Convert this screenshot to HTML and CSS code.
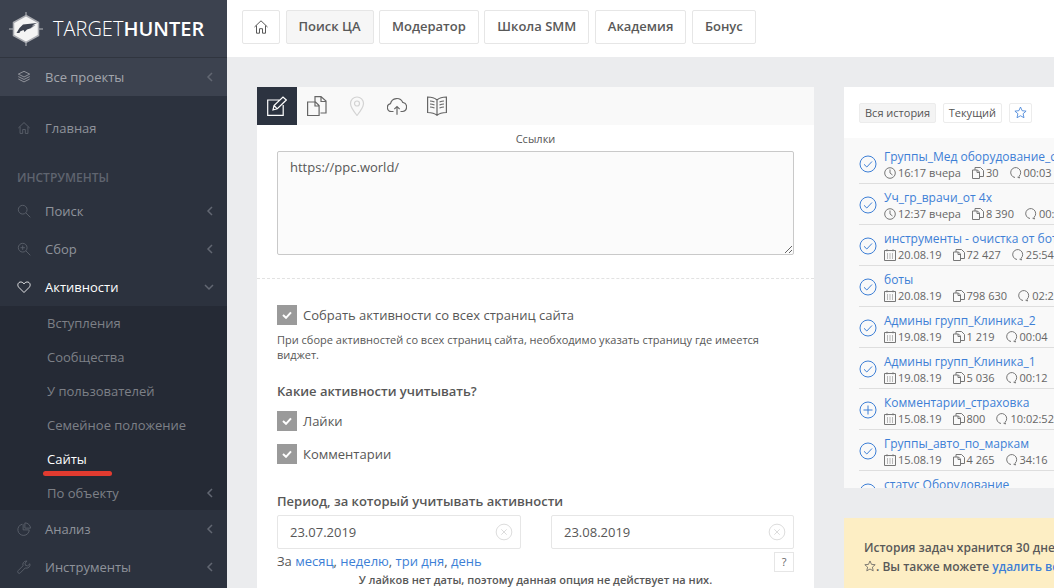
FILE: index.html
```html
<!DOCTYPE html>
<html lang="en">

<head>
  <meta charset="UTF-8">
  <title>TargetHunter</title>
  <link rel="stylesheet" href="styles.css">
</head>

<body>
  <svg class="sprite" width="0" height="0">
    <symbol id="i-layers" viewBox="0 0 16 16"><path d="M8 1.500l6.500 3.200L8 8 1.500 4.700zM1.500 7.500L8 10.800l6.500-3.300M1.500 10.300L8 13.600l6.500-3.300"/></symbol>
    <symbol id="i-home" viewBox="0 0 16 16"><path d="M1.500 8L8 1.800 14.500 8M3.500 6.500v7.700h3v-4.500h3v4.500h3V6.500"/></symbol>
    <symbol id="i-search" viewBox="0 0 16 16"><circle cx="6.500" cy="6.500" r="5"/><path d="M10.200 10.200l5 5"/></symbol>
    <symbol id="i-zoom" viewBox="0 0 16 16"><circle cx="6.500" cy="6.500" r="5"/><path d="M10.200 10.200l5 5M6.500 4v5M4 6.500h5"/></symbol>
    <symbol id="i-heart" viewBox="0 0 16 16"><path d="M8 14.300L2 8.300C0 6 1 2.300 4.300 2.300 6 2.300 7.300 3.300 8 4.500c.7-1.200 2-2.200 3.700-2.200C15 2.300 16 6 14 8.300z"/></symbol>
    <symbol id="i-pie" viewBox="0 0 16 16"><path d="M6 2.500a6.500 6.500 0 1 0 8 6.500H7V2.500M9 1v6h6.500A6.500 6.500 0 0 0 9 1z"/></symbol>
    <symbol id="i-wrench" viewBox="0 0 16 16"><path d="M10.500 1.200a4 4 0 0 0-3.600 5.400L1.300 12.200a1.700 1.700 0 0 0 2.500 2.500l5.600-5.600a4 4 0 0 0 5.300-4.800l-2.500 2.400-2.500-.6-.6-2.500 2.400-2.300z"/></symbol>
    <symbol id="i-left" viewBox="0 0 8 10"><path d="M6 1L2 5l4 4"/></symbol>
    <symbol id="i-down" viewBox="0 0 10 8"><path d="M1 2l4 4 4-4"/></symbol>
    <symbol id="i-edit" viewBox="0 0 20 20"><path d="M12.500 4H.7v15.300h15.500V9M6 14l1-4.500L16 1l3.300 3-9 8.800zM7 9.500l3.300 3.300"/></symbol>
    <symbol id="i-docs" viewBox="0 0 20 20"><path d="M.6 6h8l3.500 3.500v10H.6zM8 6v4h4M8 5.500V.6h6l5 4.400v12h-5.500M14 .6v4.900h5"/></symbol>
    <symbol id="i-pin" viewBox="0 0 20 20"><path d="M10 19.500C6 14.500 3.500 11 3.500 7.500a6.500 6.500 0 0 1 13 0c0 3.500-2.500 7-6.500 12z"/><circle cx="10" cy="7.500" r="2.500"/></symbol>
    <symbol id="i-cloud" viewBox="0 0 20 20"><path d="M6.500 15.500H4.500A4 4 0 0 1 3.500 7.600 6.500 6.500 0 0 1 15.800 6.400a4.600 4.600 0 0 1-.3 9.100h-2M10 18.800v-8.300M7.300 13.200L10 10.500l2.700 2.700"/></symbol>
    <symbol id="i-book" viewBox="0 0 20 20"><path d="M10 4C8 2.200 4 1 .6 1v15.500c3.500 0 7.400 1 9.400 2.800 2-1.800 6-2.800 9.400-2.800V1C16 1 12 2.200 10 4zM10 4v15M3 5c1.500 0 3 .4 4.500 1M3 8c1.500 0 3 .4 4.500 1M3 11c1.500 0 3 .4 4.500 1M17 5c-1.500 0-3 .4-4.500 1M17 8c-1.500 0-3 .4-4.500 1M17 11c-1.500 0-3 .4-4.500 1"/></symbol>
    <symbol id="i-star" viewBox="0 0 16 16"><path d="M8 1.300l2 4.500 4.900.5-3.700 3.200 1.100 4.900L8 12l-4.300 2.400 1.100-4.900L1.100 6.300 6 5.800z"/></symbol>
    <symbol id="i-ok" viewBox="0 0 18 18"><circle cx="9" cy="9" r="8"/><path d="M5 9.300l2.800 2.700L13 6.500"/></symbol>
    <symbol id="i-plus" viewBox="0 0 18 18"><circle cx="9" cy="9" r="8"/><path d="M9 4.500v9M4.500 9h9"/></symbol>
    <symbol id="i-clock" viewBox="0 0 12 12"><circle cx="6" cy="6" r="5.300"/><path d="M6 2.500V6l2.500 2"/></symbol>
    <symbol id="i-cal" viewBox="0 0 12 12"><path d="M.5 1.500h11v10H.5zM3 .3v2M9 .3v2M3 5h1M5.500 5h1M8 5h1M3 7h1M5.500 7h1M8 7h1M3 9h1M5.500 9h1M8 9h1"/></symbol>
    <symbol id="i-file" viewBox="0 0 12 12"><path d="M.5 3h5l2 2v6.500h-7zM5 3v2.500h2.500M3 3V.5h5.500l3 3v6h-4"/></symbol>
    <symbol id="i-talk" viewBox="0 0 12 12"><path d="M5 10.500A5 5 0 1 1 9 9.300l.5 1.700-2-.8"/></symbol>
    <symbol id="i-x" viewBox="0 0 20 20"><circle cx="10" cy="10" r="8.700"/><path d="M7 7l6 6M13 7l-6 6"/></symbol>
    <symbol id="i-tick" viewBox="0 0 10 8"><path d="M1 4l3 2.800L9 1.300"/></symbol>
  </svg>

  <aside class="sidebar">
    <div class="brand">
      <svg class="brand-logo" viewBox="0 0 36 36">
        <path class="logo-spike" d="M18 1v4M18 31v4M1 18h5M30 18h5"/>
        <path class="logo-ring" d="M18 4.500l12.500 7v13L18 31.500l-12.500-7v-13z"/>
        <path class="logo-bird" d="M8.500 22l3-5 3.500-3.500 14-1.500-5 2.500h3.500l-5 2h2.500l-6 2-2.500 2.500-1-2-3.500 1.500-.5 1.500z"/>
      </svg>
      <span class="brand-name">TARGET<b>HUNTER</b></span>
    </div>

    <a class="nav-item nav-projects">
      <svg class="nav-icon"><use href="#i-layers"/></svg><span>Все проекты</span>
      <svg class="nav-arrow"><use href="#i-left"/></svg>
    </a>

    <a class="nav-item nav-home"><svg class="nav-icon"><use href="#i-home"/></svg><span>Главная</span></a>

    <div class="nav-title">ИНСТРУМЕНТЫ</div>

    <a class="nav-item"><svg class="nav-icon"><use href="#i-search"/></svg><span>Поиск</span><svg class="nav-arrow"><use href="#i-left"/></svg></a>
    <a class="nav-item"><svg class="nav-icon"><use href="#i-zoom"/></svg><span>Сбор</span><svg class="nav-arrow"><use href="#i-left"/></svg></a>
    <a class="nav-item active"><svg class="nav-icon"><use href="#i-heart"/></svg><span>Активности</span><svg class="nav-arrow-down"><use href="#i-down"/></svg></a>

    <div class="subnav">
      <a class="sub-item">Вступления</a>
      <a class="sub-item">Сообщества</a>
      <a class="sub-item">У пользователей</a>
      <a class="sub-item">Семейное положение</a>
      <a class="sub-item current">Сайты</a>
      <a class="sub-item">По объекту<svg class="nav-arrow"><use href="#i-left"/></svg></a>
    </div>

    <a class="nav-item"><svg class="nav-icon"><use href="#i-pie"/></svg><span>Анализ</span><svg class="nav-arrow"><use href="#i-left"/></svg></a>
    <a class="nav-item"><svg class="nav-icon"><use href="#i-wrench"/></svg><span>Инструменты</span><svg class="nav-arrow"><use href="#i-left"/></svg></a>
  </aside>

  <div class="page">
    <header class="topbar">
      <a class="top-btn top-home"><svg><use href="#i-home"/></svg></a>
      <a class="top-btn selected">Поиск ЦА</a>
      <a class="top-btn">Модератор</a>
      <a class="top-btn">Школа SMM</a>
      <a class="top-btn">Академия</a>
      <a class="top-btn">Бонус</a>
    </header>

    <main class="content">
      <section class="form-card">
        <div class="tabs">
          <a class="tab active"><svg><use href="#i-edit"/></svg></a>
          <a class="tab"><svg><use href="#i-docs"/></svg></a>
          <a class="tab disabled"><svg><use href="#i-pin"/></svg></a>
          <a class="tab"><svg><use href="#i-cloud"/></svg></a>
          <a class="tab"><svg><use href="#i-book"/></svg></a>
        </div>

        <div class="links-block">
          <div class="links-label">Ссылки</div>
          <textarea class="links-input">https://ppc.world/</textarea>
        </div>

        <div class="options">
          <label class="check"><span class="check-box"><svg><use href="#i-tick"/></svg></span>Собрать активности со всех страниц сайта</label>
          <p class="hint">При сборе активностей со всех страниц сайта, необходимо указать страницу где имеется виджет.</p>

          <h4 class="group-title">Какие активности учитывать?</h4>
          <label class="check"><span class="check-box"><svg><use href="#i-tick"/></svg></span>Лайки</label>
          <label class="check check-last"><span class="check-box"><svg><use href="#i-tick"/></svg></span>Комментарии</label>

          <h4 class="group-title period-title">Период, за который учитывать активности</h4>
          <div class="dates">
            <div class="date-field"><span>23.07.2019</span><svg><use href="#i-x"/></svg></div>
            <div class="date-field"><span>23.08.2019</span><svg><use href="#i-x"/></svg></div>
          </div>
          <div class="quick">
            <span>За <a>месяц</a>, <a>неделю</a>, <a>три дня</a>, <a>день</a></span>
            <a class="help">?</a>
          </div>
          <div class="note">У лайков нет даты, поэтому данная опция не действует на них.</div>
        </div>
      </section>

      <div class="side">
        <section class="history">
          <div class="history-head">
            <a class="chip selected">Вся история</a>
            <a class="chip">Текущий</a>
            <a class="chip chip-star"><svg><use href="#i-star"/></svg></a>
          </div>
          <ul class="history-list">
            <li class="task"><svg class="task-state"><use href="#i-ok"/></svg>
              <div class="task-body"><a class="task-name">Группы_Мед оборудование_с</a>
                <div class="task-meta"><span><svg><use href="#i-clock"/></svg>16:17 вчера</span><span><svg><use href="#i-file"/></svg>30</span><span><svg><use href="#i-talk"/></svg>00:03</span></div></div></li>
            <li class="task"><svg class="task-state"><use href="#i-ok"/></svg>
              <div class="task-body"><a class="task-name">Уч_гр_врачи_от 4х</a>
                <div class="task-meta"><span><svg><use href="#i-clock"/></svg>12:37 вчера</span><span><svg><use href="#i-file"/></svg>8 390</span><span><svg><use href="#i-talk"/></svg>00:21</span></div></div></li>
            <li class="task"><svg class="task-state"><use href="#i-ok"/></svg>
              <div class="task-body"><a class="task-name">инструменты - очистка от бот</a>
                <div class="task-meta"><span><svg><use href="#i-cal"/></svg>20.08.19</span><span><svg><use href="#i-file"/></svg>72 427</span><span><svg><use href="#i-talk"/></svg>25:54</span></div></div></li>
            <li class="task"><svg class="task-state"><use href="#i-ok"/></svg>
              <div class="task-body"><a class="task-name">боты</a>
                <div class="task-meta"><span><svg><use href="#i-cal"/></svg>20.08.19</span><span><svg><use href="#i-file"/></svg>798 630</span><span><svg><use href="#i-talk"/></svg>02:25</span></div></div></li>
            <li class="task"><svg class="task-state"><use href="#i-ok"/></svg>
              <div class="task-body"><a class="task-name">Админы групп_Клиника_2</a>
                <div class="task-meta"><span><svg><use href="#i-cal"/></svg>19.08.19</span><span><svg><use href="#i-file"/></svg>1 219</span><span><svg><use href="#i-talk"/></svg>00:04</span></div></div></li>
            <li class="task"><svg class="task-state"><use href="#i-ok"/></svg>
              <div class="task-body"><a class="task-name">Админы групп_Клиника_1</a>
                <div class="task-meta"><span><svg><use href="#i-cal"/></svg>19.08.19</span><span><svg><use href="#i-file"/></svg>5 036</span><span><svg><use href="#i-talk"/></svg>00:12</span></div></div></li>
            <li class="task"><svg class="task-state"><use href="#i-plus"/></svg>
              <div class="task-body"><a class="task-name">Комментарии_страховка</a>
                <div class="task-meta"><span><svg><use href="#i-cal"/></svg>15.08.19</span><span><svg><use href="#i-file"/></svg>800</span><span><svg><use href="#i-talk"/></svg>10:02:52</span></div></div></li>
            <li class="task"><svg class="task-state"><use href="#i-ok"/></svg>
              <div class="task-body"><a class="task-name">Группы_авто_по_маркам</a>
                <div class="task-meta"><span><svg><use href="#i-cal"/></svg>15.08.19</span><span><svg><use href="#i-file"/></svg>4 265</span><span><svg><use href="#i-talk"/></svg>34:16</span></div></div></li>
            <li class="task"><svg class="task-state"><use href="#i-ok"/></svg>
              <div class="task-body"><a class="task-name">статус Оборудование</a></div></li>
          </ul>
        </section>

        <section class="notice">
          <div>История задач хранится 30 дней</div>
          <div><svg><use href="#i-star"/></svg>. Вы также можете <a>удалить все</a></div>
        </section>
      </div>
    </main>
  </div>
</body>

</html>
```

FILE: styles.css
```css
:root {
  --side-bg: #2c323e;
  --side-light: #3c424f;
  --side-sub: #252a35;
  --page-bg: #ebecee;
  --text: #575757;
  --link: #3d7fd6;
  --border: #e6e6e6;
}

* {
  box-sizing: border-box;
}

html,
body {
  height: 100%;
}

body {
  margin: 0;
  display: flex;
  width: 1054px;
  height: 588px;
  overflow: hidden;
  font-family: "Open Sans", "Noto Sans", sans-serif;
  font-size: 13px;
  color: var(--text);
  background: var(--page-bg);
}

.sprite {
  display: none;
}

svg {
  fill: none;
  stroke: currentColor;
  stroke-width: 1;
}

/* sidebar */
.sidebar {
  flex: none;
  width: 227px;
  height: 588px;
  overflow: hidden;
  background: var(--side-bg);
  color: #8f939b;
}

.brand {
  display: flex;
  align-items: center;
  height: 58px;
  padding-left: 8px;
  background: var(--side-light);
  border-bottom: 1px solid #30353f;
}

.brand-logo {
  flex: none;
  width: 36px;
  height: 36px;
  margin-right: 9px;
}

.logo-spike {
  stroke: #b9bbc0;
}

.logo-ring {
  fill: #f4f4f4;
  stroke: #a9abb1;
  stroke-width: 1.500;
}

.logo-bird {
  fill: #3c424f;
  stroke: none;
}

.brand-name {
  font-size: 20px;
  font-weight: 300;
  color: #fff;
}

.brand-name b {
  font-weight: 600;
}

.nav-item {
  display: flex;
  align-items: center;
  height: 38px;
  padding-left: 17px;
}

.nav-projects {
  background: var(--side-light);
  color: #a3a6ad;
}

.nav-home {
  margin-top: 13px;
}

.nav-icon {
  flex: none;
  width: 14px;
  height: 14px;
  margin-right: 14px;
  color: #5d626d;
}

.nav-projects .nav-icon {
  color: #9a9da4;
}

.nav-arrow {
  flex: none;
  width: 8px;
  height: 10px;
  margin-left: auto;
  margin-right: 13px;
  color: #626772;
  stroke-width: 1.500;
}

.nav-arrow-down {
  flex: none;
  width: 10px;
  height: 8px;
  margin-left: auto;
  margin-right: 13px;
  color: #626772;
  stroke-width: 1.500;
}

.nav-title {
  height: 17px;
  margin-top: 22px;
  margin-bottom: 6px;
  padding-left: 17px;
  font-size: 12px;
  font-weight: 600;
  line-height: 17px;
  color: #5f646f;
}

.nav-item.active {
  color: #fff;
}

.nav-item.active .nav-icon {
  color: #fff;
}

.subnav {
  background: var(--side-sub);
}

.sub-item {
  display: flex;
  align-items: center;
  height: 34px;
  padding-left: 47px;
  color: #7d8087;
}

.sub-item.current {
  position: relative;
  color: #fff;
}

.sub-item.current::after {
  content: "";
  position: absolute;
  left: 43px;
  top: 29px;
  width: 69px;
  height: 5px;
  border-radius: 3px;
  background: #e23b30;
}

/* top bar */
.page {
  flex: 1;
  min-width: 0;
  display: flex;
  flex-direction: column;
}

.topbar {
  display: flex;
  gap: 5.500px;
  height: 57px;
  padding: 10px 15px;
  background: #fff;
}

.top-btn {
  display: flex;
  align-items: center;
  height: 34px;
  padding: 0 12px 2px;
  border: 1px solid var(--border);
  border-radius: 2px;
  font-weight: 600;
  color: #595959;
  background: #fff;
}

.top-btn.selected {
  background: #f6f6f6;
}

.top-home {
  width: 38px;
  padding: 0 10px;
}

.top-home svg {
  width: 16px;
  height: 16px;
}

/* form card */
.content {
  flex: 1;
  display: flex;
  align-items: flex-start;
  gap: 30px;
  padding: 30px 0 0 30px;
  overflow: hidden;
}

.form-card {
  flex: none;
  width: 557px;
  height: 501px;
  overflow: hidden;
  background: #fff;
}

.tabs {
  display: flex;
  height: 38px;
  background: #f9f9f9;
}

.tab {
  display: flex;
  align-items: center;
  justify-content: center;
  width: 40px;
  color: #666;
}

.tab svg {
  width: 20px;
  height: 20px;
  stroke-width: 1.200;
}

.tab.active {
  color: #fff;
  background: #2c3340;
}

.tab.disabled {
  color: #d3d3d3;
}

.links-block {
  padding: 7px 20px 23px;
  border-bottom: 1px dashed #e2e2e2;
}

.links-label {
  margin-bottom: 5px;
  font-size: 11px;
  line-height: 14px;
  text-align: center;
}

.links-input {
  display: block;
  width: 100%;
  height: 104px;
  padding: 6px 12px;
  border: 1px solid #c9c9c9;
  border-radius: 2px;
  outline: none;
  font: inherit;
  color: var(--text);
  background: #fbfbfb;
}

.options {
  padding: 26px 20px 0;
}

.check {
  display: flex;
  align-items: center;
  height: 20px;
  gap: 6px;
}

.check-box {
  flex: none;
  display: flex;
  align-items: center;
  justify-content: center;
  width: 20px;
  height: 20px;
  color: #fff;
  background: #9a9a9a;
}

.check-box svg {
  width: 10px;
  height: 8px;
  stroke-width: 2;
}

.hint {
  margin: 7px 0 0;
  font-size: 11px;
  line-height: 15px;
}

.group-title {
  margin: 20px 0 11px;
  font-size: 13px;
  font-weight: 600;
  line-height: 18px;
}

.check + .check {
  margin-top: 13px;
}

.period-title {
  margin: 28px 0 5px;
}

.dates {
  display: grid;
  grid-template-columns: 244px 243px;
  gap: 30px;
}

.date-field {
  display: flex;
  align-items: center;
  justify-content: space-between;
  height: 34px;
  padding: 0 7px 0 12px;
  border: 1px solid var(--border);
  border-radius: 2px;
}

.date-field svg {
  width: 18px;
  height: 18px;
  color: #d8d8d8;
}

.quick {
  display: flex;
  align-items: flex-start;
  justify-content: space-between;
  margin-top: 3px;
  line-height: 20px;
}

.quick span {
  margin-top: -1px;
}

.quick a,
.notice a,
.task-name {
  color: var(--link);
}

.quick .help {
  width: 20px;
  height: 20px;
  border: 1px solid var(--border);
  font-size: 11px;
  line-height: 18px;
  text-align: center;
  color: #666;
}

.note {
  font-size: 11px;
  font-weight: 600;
  line-height: 15px;
  text-align: center;
}

/* history */
.side {
  flex: none;
  width: 210px;
  display: flex;
  flex-direction: column;
  gap: 30px;
}

.history {
  height: 401px;
  overflow: hidden;
  background: #f9f9f9;
}

.history-head {
  display: flex;
  gap: 6.500px;
  height: 51px;
  padding: 16px 15px 0;
  background: #fff;
}

.chip {
  height: 20px;
  padding: 0 5px;
  border: 1px solid #ececec;
  border-radius: 2px;
  font-size: 11px;
  line-height: 18px;
  color: #555;
  background: #fff;
}

.chip.selected {
  background: #f4f4f4;
}

.chip-star {
  width: 23px;
  padding: 2px 0 0 4px;
  color: var(--link);
}

.chip-star svg {
  width: 13px;
  height: 13px;
}

.history-list {
  margin: 0;
  padding: 5px 0 0 15px;
  list-style: none;
}

.task {
  display: flex;
  align-items: flex-start;
  gap: 7px;
  height: 41px;
  padding-top: 6px;
  border-bottom: 1px solid #dedede;
  white-space: nowrap;
}

.task:last-child {
  border-bottom: none;
}

.task-state {
  flex: none;
  width: 18px;
  height: 18px;
  margin-top: 6px;
  color: var(--link);
}

.task-name {
  display: block;
  font-size: 12px;
  line-height: 16px;
}

.task-meta {
  display: flex;
  gap: 11px;
  font-size: 11px;
  line-height: 16px;
  color: #666;
}

.task-meta span {
  display: flex;
  align-items: center;
  gap: 2px;
}

.task-meta svg {
  flex: none;
  width: 12px;
  height: 12px;
  color: #777;
}

.notice {
  height: 70px;
  padding: 20px 20px 0;
  font-size: 12px;
  font-weight: 600;
  line-height: 19px;
  white-space: nowrap;
  overflow: hidden;
  color: #595959;
  background: #fdeec4;
}

.notice svg {
  width: 12px;
  height: 12px;
  vertical-align: -1px;
}
```
